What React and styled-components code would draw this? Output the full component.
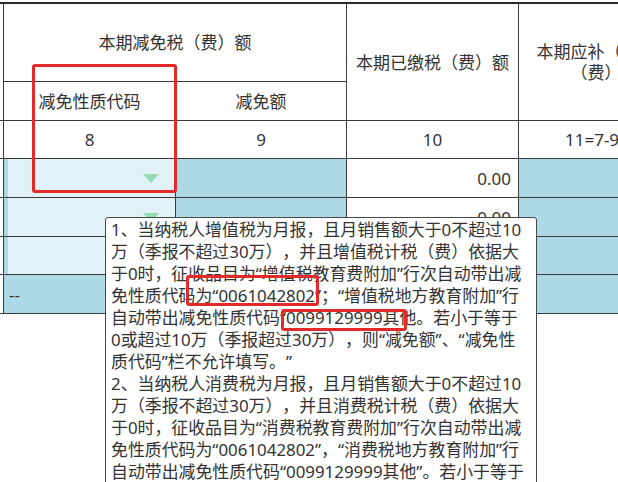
import React from 'react';
import styled, { createGlobalStyle } from 'styled-components';

const Global = createGlobalStyle`
  html, body { margin: 0; padding: 0; background: #fff; }
  body {
    width: 618px; height: 482px; overflow: hidden;
    font-family: "Noto Sans", "Noto Sans CJK SC", sans-serif;
    text-spacing-trim: space-all;
  }
`;

const Page = styled.div`
  position: relative;
  width: 618px;
  height: 482px;
  overflow: hidden;
  box-sizing: border-box;
  padding-top: 2px;
  color: #333;
  font-size: 17px;
`;

const Grid = styled.div`
  display: grid;
  grid-template-columns: 4px 172px 171px 172px 172px;
  grid-template-rows: 78px 39px 38px 39px 39px 38px 39px;
  border-top: 2px solid #2a2a2a;
  width: max-content;
`;

const Cell = styled.div`
  box-sizing: border-box;
  border-right: 1px solid #3a3a3a;
  border-bottom: 1px solid #3a3a3a;
  background: ${p => p.$bg || '#fff'};
  display: flex;
  align-items: center;
  justify-content: ${p => (p.$align === 'right' ? 'flex-end' : p.$align === 'left' ? 'flex-start' : 'center')};
  text-align: center;
  padding: 0 ${p => (p.$pad ?? 6)}px;
  grid-column: ${p => p.$col || 'auto'};
  grid-row: ${p => p.$row || 'auto'};
  line-height: 21px;
  overflow: hidden;
`;

const EdgeCell = styled(Cell)`
  padding: 0;
`;

const CodeCell = styled(Cell)`
  padding: 0 0 0 4px;
  align-items: stretch;
  background: #add8e6;
`;

const CodeInput = styled.div`
  flex: 1;
  background: #e1f1f8;
  display: flex;
  align-items: center;
  justify-content: flex-end;
  padding-right: 16px;
`;

const Caret = styled.span`
  width: 0;
  height: 0;
  border-left: 8px solid transparent;
  border-right: 8px solid transparent;
  border-top: 9px solid #93dcb4;
`;

const Tip = styled.div`
  position: absolute;
  left: 105px;
  top: 217px;
  width: 432px;
  height: 300px;
  box-sizing: border-box;
  background: #fff;
  border: 1px solid #484848;
  border-radius: 3px;
  padding: 1px 0 0 5px;
  font-size: 16.9px;
  line-height: 22px;
  color: #333;
`;

const TipLine = styled.div`
  white-space: nowrap;
`;

const Mark = styled.div`
  position: absolute;
  left: ${p => p.$x}px;
  top: ${p => p.$y}px;
  width: ${p => p.$w}px;
  height: ${p => p.$h}px;
  box-sizing: border-box;
  border: 3px solid #e22a2a;
  border-radius: 3px;
  pointer-events: none;
`;

const tipLines = [
  '1、当纳税人增值税为月报，且月销售额大于0不超过10',
  '万（季报不超过30万），并且增值税计税（费）依据大',
  '于0时，征收品目为“增值税教育费附加”行次自动带出减',
  '免性质代码为“0061042802”；“增值税地方教育附加”行',
  '自动带出减免性质代码“0099129999其他。若小于等于',
  '0或超过10万（季报超过30万），则“减免额”、“减免性',
  '质代码”栏不允许填写。”',
  '2、当纳税人消费税为月报，且月销售额大于0不超过10',
  '万（季报不超过30万），并且消费税计税（费）依据大',
  '于0时，征收品目为“消费税教育费附加”行次自动带出减',
  '免性质代码为“0061042802”，“消费税地方教育附加”行',
  '自动带出减免性质代码“0099129999其他”。若小于等于',
];

const BLUE = '#add8e6';

export default function App() {
  return (
    <>
      <Global />
      <Page>
        <Grid>
          <EdgeCell $col="1" $row="1 / span 2" />
          <Cell $col="2 / span 2" $row="1">本期减免税（费）额</Cell>
          <Cell $col="4" $row="1 / span 2">本期已缴税（费）额</Cell>
          <Cell $col="5" $row="1 / span 2">本期应补（退）税（费）额</Cell>
          <Cell $col="2" $row="2">减免性质代码</Cell>
          <Cell $col="3" $row="2">减免额</Cell>

          <EdgeCell />
          <Cell>8</Cell>
          <Cell>9</Cell>
          <Cell>10</Cell>
          <Cell>11=7-9-10</Cell>

          {[0, 1, 2].map(i => (
            <React.Fragment key={i}>
              <EdgeCell />
              <CodeCell>
                <CodeInput>
                  <Caret />
                </CodeInput>
              </CodeCell>
              <Cell $bg={BLUE} />
              <Cell $align="right" $pad={7}>{i < 2 ? '0.00' : ''}</Cell>
              <Cell $bg={BLUE} />
            </React.Fragment>
          ))}

          <EdgeCell />
          <Cell $bg={BLUE} $align="left" $pad={5}>--</Cell>
          <Cell $bg={BLUE} />
          <Cell $align="right" $pad={7} />
          <Cell $bg={BLUE} />
        </Grid>

        <Mark $x={32} $y={64} $w={145} $h={129} />

        <Tip>
          {tipLines.map((l, i) => (
            <TipLine key={i}>{l}</TipLine>
          ))}
        </Tip>

        <Mark $x={186} $y={275} $w={133} $h={31} />
        <Mark $x={281} $y={309} $w={126} $h={22} />
      </Page>
    </>
  );
}
